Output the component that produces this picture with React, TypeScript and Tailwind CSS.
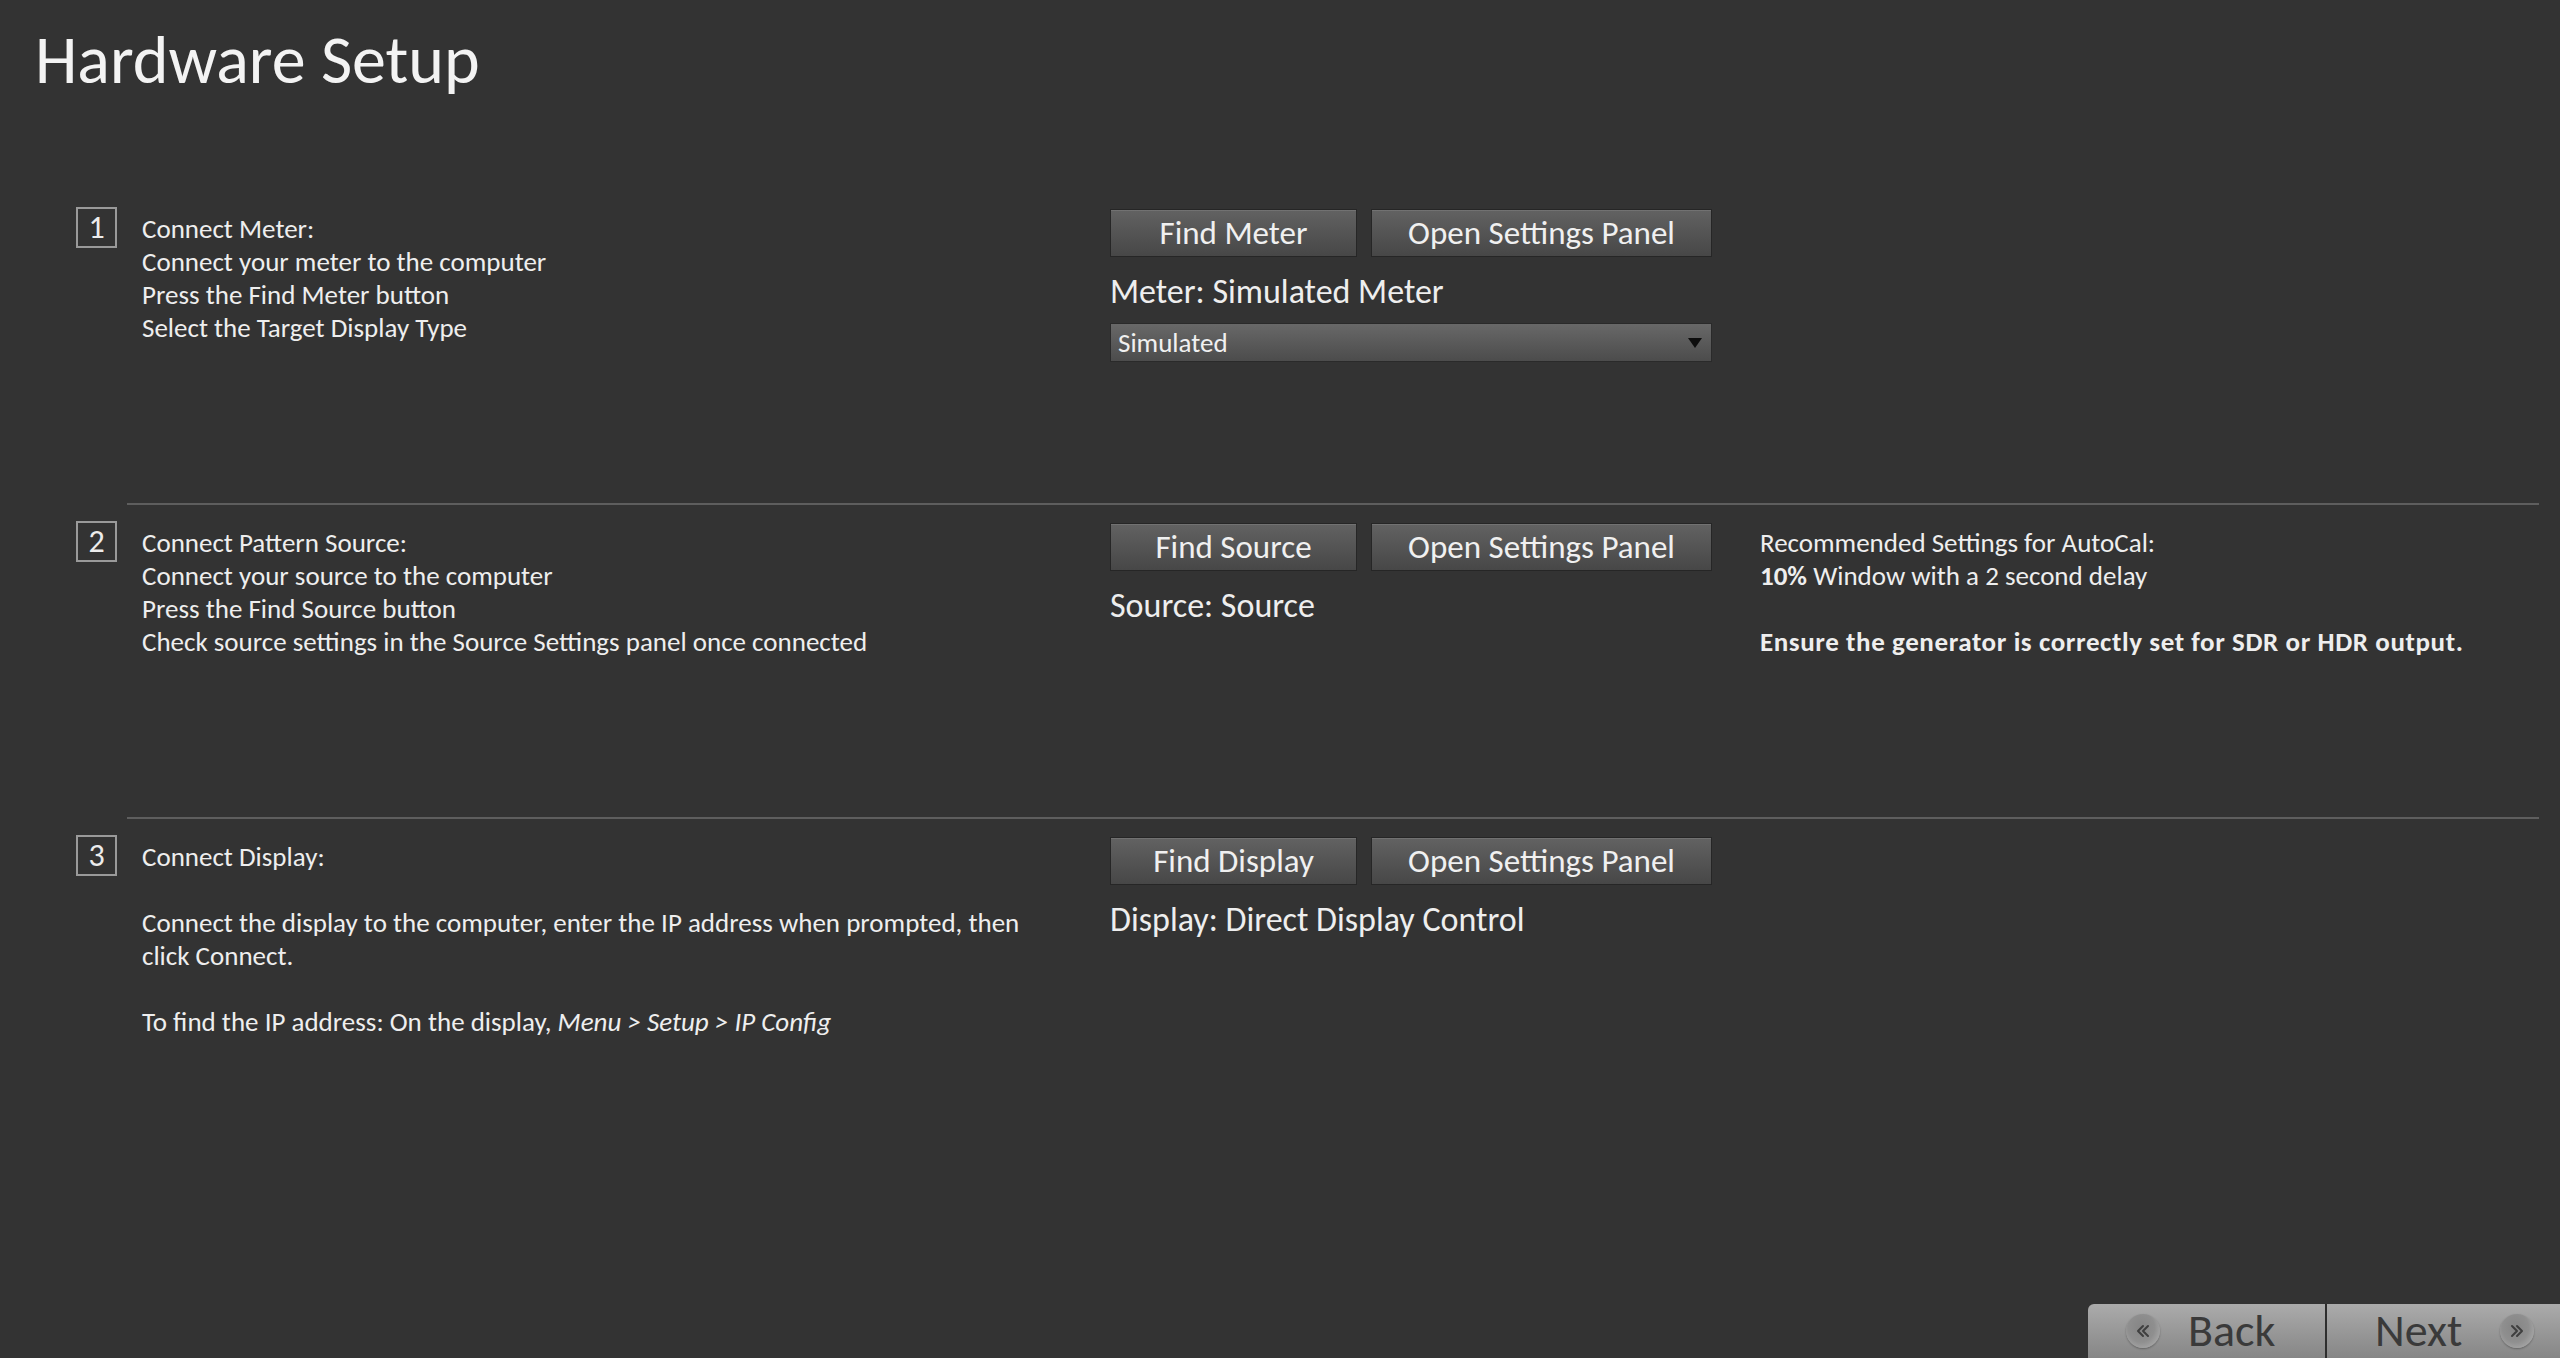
import React from 'react';

const Btn: React.FC<{ w: string; children: React.ReactNode }> = ({ w, children }) => (
  <div
    className={`${w} h-[48px] flex items-center justify-center border border-[#262626] bg-linear-to-b from-[#626262] to-[#474747] shadow-[inset_0_1px_0_rgba(255,255,255,0.1)] text-[33px] leading-none text-[#f0f0f0]`}
  >
    {children}
  </div>
);

const NumBox: React.FC<{ n: number }> = ({ n }) => (
  <div className="w-[41px] h-[41px] shrink-0 border-2 border-[#9a9a9a] flex items-center justify-center text-[32px] leading-none text-[#ececec]">
    {n}
  </div>
);

const Divider: React.FC = () => (
  <div className="ml-[127px] mr-[21px] mb-[16px] h-[2px] bg-[#5e5e5e]" />
);

// round grey knob with a double chevron
const Round: React.FC<{ dir: 'left' | 'right'; className?: string }> = ({ dir, className }) => (
  <span
    className={`w-[34px] h-[34px] rounded-full bg-radial-[at_45%_40%] from-[#858585] via-[#8f8f8f] to-[#b8b8b8] shadow-[0_1px_2px_rgba(0,0,0,0.3)] flex items-center justify-center ${className ?? ''}`}
  >
    <svg width="16" height="14" viewBox="0 0 16 14" fill="none" stroke="#3f3f3f" strokeWidth="2" strokeLinecap="round" strokeLinejoin="round">
      {dir === 'left' ? (
        <>
          <path d="M8 2 L3 7 L8 12" />
          <path d="M13 2 L8 7 L13 12" />
        </>
      ) : (
        <>
          <path d="M3 2 L8 7 L3 12" />
          <path d="M8 2 L13 7 L8 12" />
        </>
      )}
    </svg>
  </span>
);

const App: React.FC = () => {
  return (
    <div className="w-full h-[1358px] bg-[#333333] text-[#eeeeee] flex flex-col overflow-hidden font-[Carlito,Lato,sans-serif]">
      <header className="h-[207px] pl-[35px] pt-[22px]">
        <h1 className="text-[68px] leading-[76px] text-[#f3f3f3]">Hardware Setup</h1>
      </header>

      {/* step 1 */}
      <section className="flex h-[296px] pl-[76px]">
        <NumBox n={1} />
        <div className="ml-[25px] w-[968px] pt-[5px] text-[27px] leading-[33px]">
          <p>Connect Meter:</p>
          <p>Connect your meter to the computer</p>
          <p>Press the Find Meter button</p>
          <p>Select the Target Display Type</p>
        </div>
        <div className="w-[650px] pt-[2px]">
          <div className="flex gap-[14px]">
            <Btn w="w-[247px]">Find Meter</Btn>
            <Btn w="w-[341px]">Open Settings Panel</Btn>
          </div>
          <div className="mt-[16px] text-[34px] leading-[38px]">Meter: Simulated Meter</div>
          <div className="mt-[12px] w-[602px] h-[39px] flex items-center justify-between px-[7px] border border-[#2a2a2a] bg-linear-to-b from-[#686868] to-[#4c4c4c] text-[27px] leading-none text-[#f0f0f0]">
            <span>Simulated</span>
            <svg width="14" height="10" viewBox="0 0 14 10" className="mr-[2px]">
              <path d="M0 0 H14 L7 10 Z" fill="#0d0d0d" />
            </svg>
          </div>
        </div>
      </section>
      <Divider />

      {/* step 2 */}
      <section className="flex h-[296px] pl-[76px]">
        <NumBox n={2} />
        <div className="ml-[25px] w-[968px] pt-[5px] text-[27px] leading-[33px]">
          <p>Connect Pattern Source:</p>
          <p>Connect your source to the computer</p>
          <p>Press the Find Source button</p>
          <p>Check source settings in the Source Settings panel once connected</p>
        </div>
        <div className="w-[650px] pt-[2px]">
          <div className="flex gap-[14px]">
            <Btn w="w-[247px]">Find Source</Btn>
            <Btn w="w-[341px]">Open Settings Panel</Btn>
          </div>
          <div className="mt-[16px] text-[34px] leading-[38px]">Source: Source</div>
        </div>
        <div className="pt-[5px] text-[27px] leading-[33px]">
          <p>Recommended Settings for AutoCal:</p>
          <p>
            <b>10%</b> Window with a 2 second delay
          </p>
          <p className="h-[33px]" />
          <p className="font-bold tracking-[0.6px]">Ensure the generator is correctly set for SDR or HDR output.</p>
        </div>
      </section>
      <Divider />

      {/* step 3 */}
      <section className="flex h-[296px] pl-[76px]">
        <NumBox n={3} />
        <div className="ml-[25px] w-[968px] pt-[5px] text-[27px] leading-[33px]">
          <p>Connect Display:</p>
          <p className="h-[33px]" />
          <p>
            Connect the display to the computer, enter the IP address when prompted, then
            <br />
            click Connect.
          </p>
          <p className="h-[33px]" />
          <p>
            To find the IP address: On the display, <i>Menu &gt; Setup &gt; IP Config</i>
          </p>
        </div>
        <div className="w-[650px] pt-[2px]">
          <div className="flex gap-[14px]">
            <Btn w="w-[247px]">Find Display</Btn>
            <Btn w="w-[341px]">Open Settings Panel</Btn>
          </div>
          <div className="mt-[16px] text-[34px] leading-[38px]">Display: Direct Display Control</div>
        </div>
      </section>

      <footer className="mt-auto flex justify-end">
        <div className="flex h-[54px] text-[#3a3a3a] text-[46px] leading-none">
          <div className="w-[239px] flex items-center rounded-tl-[6px] border-r-2 border-[#2e2e2e] bg-linear-to-b from-[#ababab] to-[#868686]">
            <Round dir="left" className="ml-[38px]" />
            <span className="ml-[28px] pb-[2px]">Back</span>
          </div>
          <div className="w-[233px] flex items-center bg-linear-to-b from-[#ababab] to-[#868686]">
            <span className="ml-[48px] pb-[2px]">Next</span>
            <Round dir="right" className="ml-auto mr-[26px]" />
          </div>
        </div>
      </footer>
    </div>
  );
};

export default App;
